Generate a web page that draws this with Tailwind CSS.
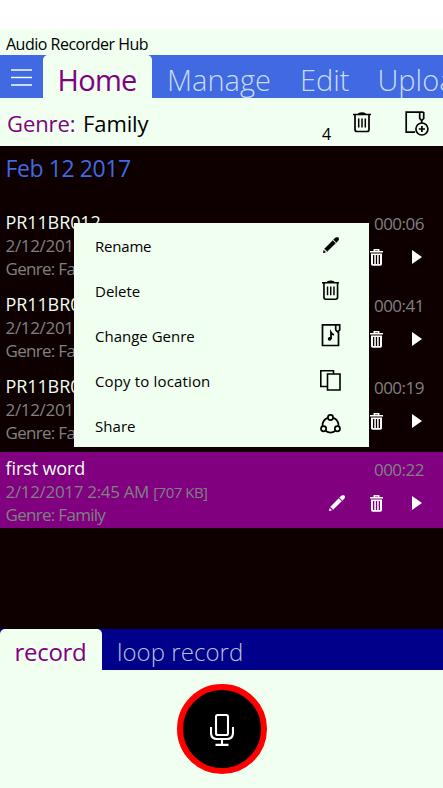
<!DOCTYPE html>
<html lang="en">
<head>
<meta charset="utf-8">
<title>Audio Recorder Hub</title>
<script src="https://cdn.jsdelivr.net/npm/@tailwindcss/browser@4"></script>
</head>
<body class="bg-white">
<svg class="hidden">
  <symbol id="bin" viewBox="0 0 18 21"><path d="M0 2.5H18M5.5 2Q9 .2 12.5 2M2 3V17.5Q2 19.5 4 19.5H14Q16 19.5 16 17.5V3" fill="none" stroke="currentColor" stroke-width="1.7"/><path d="M5.7 6.5V15.5M9 6.5V15.5M12.3 6.5V15.5" fill="none" stroke="currentColor" stroke-width="1.5"/></symbol>
  <symbol id="smallbin" viewBox="0 0 13 17"><path d="M0 2.7H13M4.3 2V.7H8.7V2" fill="none" stroke="currentColor" stroke-width="1.5"/><path d="M1 4.5H12V15Q12 16.7 10.3 16.7H2.7Q1 16.7 1 15ZM3 6V15H4.3V6ZM5.85 6V15H7.15V6ZM8.7 6V15H10V6Z" fill="currentColor" fill-rule="evenodd"/></symbol>
  <symbol id="pencil" viewBox="0 0 16 16"><path d="M0 15.9L.8 13.3L2.7 15.2ZM1.4 12L9.8 3.4L12.6 6.2L4 14.6Q3.4 12.6 1.4 12ZM10.6 2.6L12.2 1Q14 -.5 15.4 .7Q16.6 2.2 15 3.8L13.4 5.4Z" fill="currentColor" stroke="currentColor" stroke-width=".4"/></symbol>
  <symbol id="play" viewBox="0 0 10 14"><path d="M0 0L10 7L0 14Z" fill="currentColor"/></symbol>
</svg>
<main class="flex flex-col w-[443px] h-[788px] pt-[29px] overflow-hidden text-black font-['Open_Sans','Noto_Sans',sans-serif] whitespace-nowrap">
  <header class="h-[26px] shrink-0 bg-[#f0fff0] pl-[6px] pt-[3px] text-[16px] leading-[24px] tracking-[-0.5px]">Audio Recorder Hub</header>

  <nav class="flex h-[43px] shrink-0 bg-[#4169e1] text-[29px] leading-[43px] font-light text-[#c6dcf4]">
    <div class="w-[42.5px] shrink-0 pl-[11px] pt-[14px]">
      <svg class="block" width="21" height="17" viewBox="0 0 21 17"><path d="M0 1H21M0 8.5H21M0 16H21" stroke="#f0fff0" stroke-width="1.7"/></svg>
    </div>
    <div class="w-[109.5px] shrink-0 rounded-t-[5px] bg-[#f0fff0] pl-[15px] pt-[3px] font-normal text-[#800080] tracking-[-0.7px]">Home</div>
    <div class="w-[147.5px] shrink-0 pl-[15px] pt-[3px]">Manage</div>
    <div class="w-[78px] shrink-0 pt-[3px] pl-[0.5px]">Edit</div>
    <div class="shrink-0 pt-[3px]">Upload</div>
  </nav>

  <section class="flex h-[48px] shrink-0 bg-[#f0fff0] text-[22px] leading-[45px] pl-[7px] pt-[3px]">
    <div class="w-[76px] text-[#800080] tracking-[-0.1px]">Genre:</div>
    <div class="w-[239px] tracking-[-0.1px]">Family</div>
    <div class="w-[31px] text-[16px] leading-[20px] pt-[23px]">4</div>
    <svg class="mt-[10.5px] w-[18px] h-[21px]"><use href="#bin"/></svg>
    <svg class="ml-[34px] mt-[9.5px]" width="24" height="25" viewBox="0 0 24 25" fill="none" stroke="#000" stroke-width="1.7"><path d="M10 21.2H1.2V1.2H18.5M14.7 1V7.5L16.7 9.5L18.7 7.5V1M16.7 9V12.3"/><circle cx="16.9" cy="18" r="6"/><path d="M13.8 18H20M16.9 14.9V21.1"/></svg>
  </section>

  <section class="relative h-[483px] shrink-0 bg-[#0e0000]">
    <h2 class="h-[60px] pl-[5.5px] pt-[2px] text-[23px] leading-[40px] tracking-[-0.4px] text-[#4169e1]">Feb 12 2017</h2>
    <div id="rows" class="flex flex-col gap-[6px]"></div>

    <div id="menu" class="absolute left-[74px] top-[76.5px] w-[295px] h-[224.5px] bg-[#f0fff0] text-[15px]">
      <div class="flex h-[45px] items-center justify-between pl-[21px] pr-[30px]"><span class="pt-[3px] tracking-[-0.2px]">Rename</span><svg class="w-[16px] h-[16px]"><use href="#pencil"/></svg></div>
      <div class="flex h-[45px] items-center justify-between pl-[21px] pr-[30px]"><span class="pt-[3px]">Delete</span><svg class="w-[17.5px] h-[21px]"><use href="#bin"/></svg></div>
      <div class="flex h-[45px] items-center justify-between pl-[21px] pr-[28px]"><span class="pt-[3px]">Change Genre</span>
        <svg width="20" height="24" viewBox="0 0 20 24" fill="none" stroke="#000" stroke-width="1.7"><path d="M14.5 1.8H1.5V22.5H17.5V9M14.7 1.8H18.7V6.8L16.7 9L14.7 6.8Z"/><path d="M10 16V9.5Q11 11.3 13 11.8" stroke-width="1.8"/><circle cx="8.7" cy="15.8" r="1.9" fill="#000" stroke="none"/></svg></div>
      <div class="flex h-[45px] items-center justify-between pl-[21px] pr-[28px]"><span class="pt-[3px] tracking-[0.15px]">Copy to location</span>
        <svg width="21" height="21" viewBox="0 0 21 21" fill="none" stroke="#000" stroke-width="1.6"><path d="M7 16.5H.8V.8H13.5V4M7.5 4H20V20H7.5Z"/></svg></div>
      <div class="flex h-[44.5px] items-center justify-between pl-[21px] pr-[28px]"><span class="pt-[3px] tracking-[0.05px]">Share</span>
        <svg class="-mt-[2px]" width="21" height="20" viewBox="0 0 21 20" fill="none" stroke="#000" stroke-width="1.7"><circle cx="10.5" cy="3.5" r="2.6"/><circle cx="3.6" cy="14.8" r="2.6"/><circle cx="17.4" cy="14.8" r="2.6"/><path d="M7.8 3.9Q2.3 6 2.5 12M13.2 3.9Q18.7 6 18.5 12M5.7 17Q10.5 20.3 15.3 17"/></svg></div>
    </div>
  </section>

  <nav class="flex h-[41px] shrink-0 bg-[#00008b] text-[24px] leading-[41px]">
    <div class="w-[102px] rounded-t-[5px] bg-[#f0fff0] pl-[14.5px] pt-[2px] text-[#800080] tracking-[-0.3px]">record</div>
    <div class="pl-[15px] pt-[2px] font-light text-[#b4c3da] tracking-[0.05px]">loop record</div>
  </nav>
  <section class="flex h-[118px] shrink-0 justify-center bg-[#f0fff0] pt-[14px]">
    <div class="flex w-[90px] h-[90px] items-center justify-center rounded-full border-[6.5px] border-[#ff0000] bg-black">
      <svg class="mt-[1px]" width="24" height="32" viewBox="0 0 24 32" fill="none" stroke="#fff" stroke-width="2.1"><rect x="6" y="1" width="12" height="20" rx="1.8"/><path d="M1 13V18.5Q1 25 7 25H17Q23 25 23 18.5V13M12 25V31M5.5 30.9H18.5"/></svg>
    </div>
  </section>
</main>
<script>
const rows = [["PR11BR012","2/12/201","","Genre: Fa","000:06"],["PR11BR0","2/12/201","","Genre: Fa","000:41"],["PR11BR0","2/12/201","","Genre: Fa","000:19"],["first word","2/12/2017 2:45 AM","[707 KB]","Genre: Family","000:22"]];
document.getElementById("rows").innerHTML = rows.map((r, i) => `
  <article class="flex justify-between h-[76px] ${i === 3 ? "bg-[#800080]" : ""} pl-[5.5px] pt-[3px] text-[17px] text-[#808080]">
    <div>
      <div class="text-[18px] leading-[25px] pt-[0.5px] -mb-[0.5px] tracking-[-0.1px] text-[#f0fff0]">${r[0]}</div>
      <div class="leading-[24px] tracking-[-0.32px]">${r[1]} <span class="text-[15px] tracking-[-0.5px]">${r[2]}</span></div>
      <div class="leading-[21px] tracking-[-0.7px]">${r[3]}</div>
    </div>
    <div class="pr-[19px]">
      <div class="leading-[29px] tracking-[-0.5px] text-right">${r[4]}</div>
      <div class="flex items-center justify-end h-[38px] pr-[2.5px] text-white">
        ${i === 3 ? '<svg class="w-[16px] h-[16px] mr-[25px]"><use href="#pencil"/></svg>' : ""}
        <svg class="w-[13px] h-[17px] mr-[28.5px]"><use href="#smallbin"/></svg>
        <svg class="w-[10px] h-[14px]"><use href="#play"/></svg>
      </div>
    </div>
  </article>`).join("");
</script>
</body>
</html>
